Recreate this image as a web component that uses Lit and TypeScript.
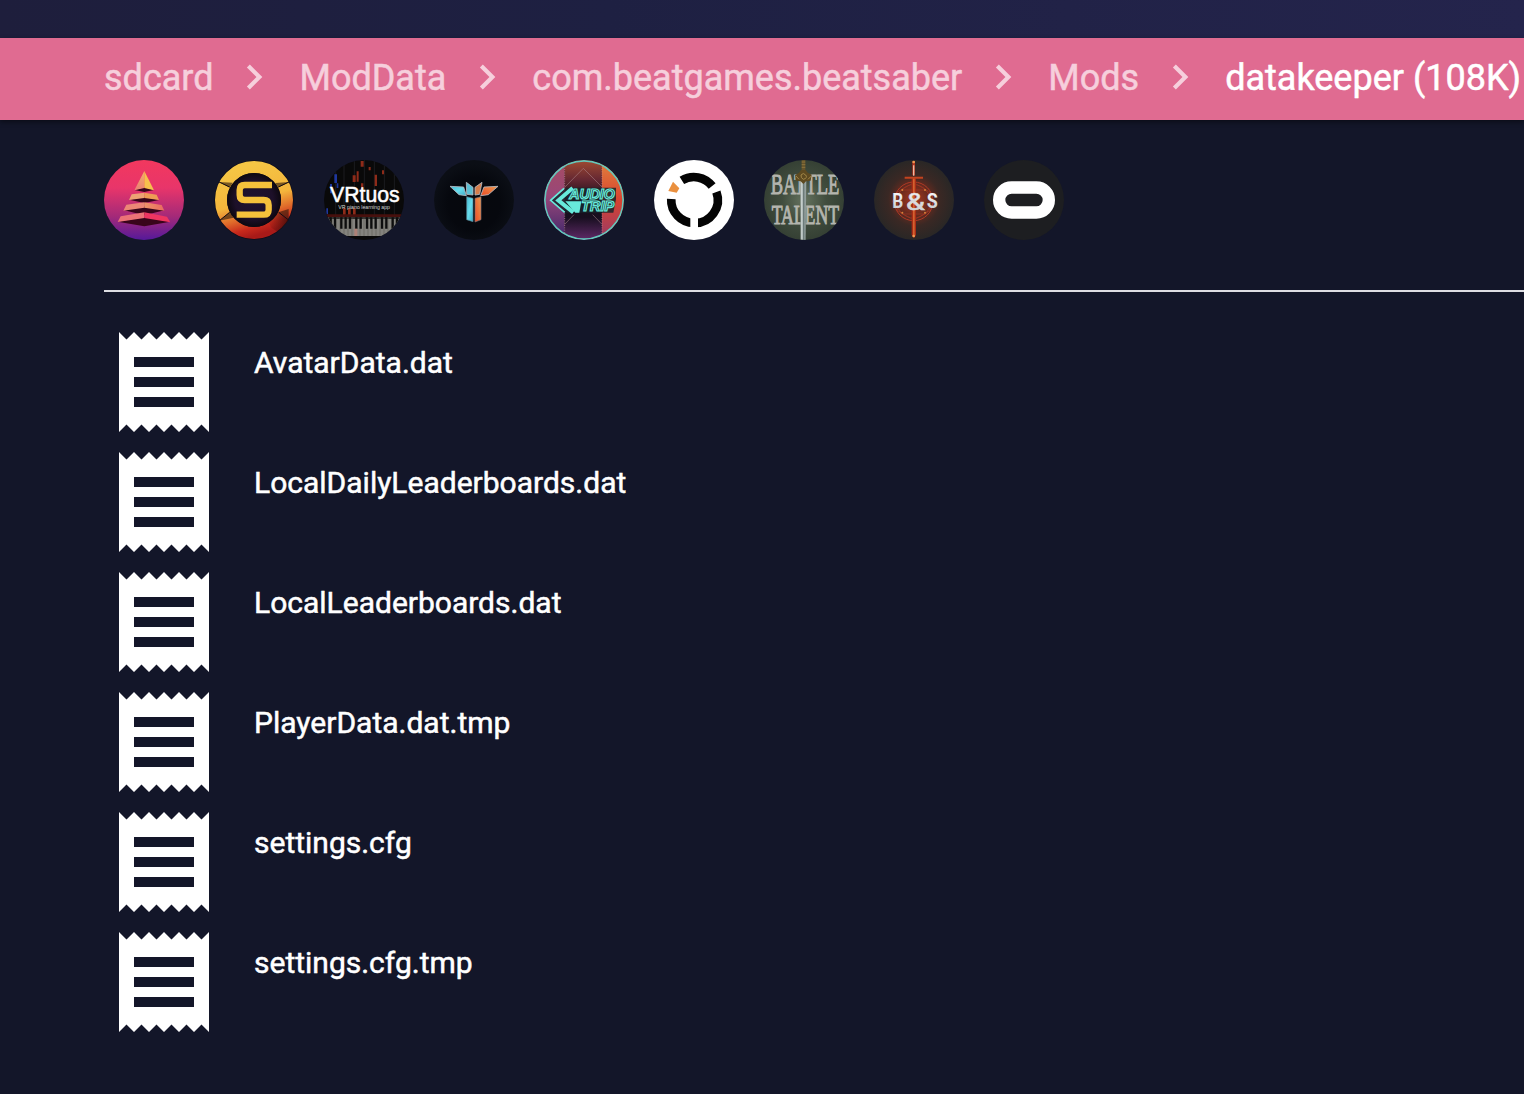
import { LitElement, html, css, svg } from "lit";
import { customElement, property } from "lit/decorators.js";

const crumbs = ["sdcard", "ModData", "com.beatgames.beatsaber", "Mods", "datakeeper (108K)"];

const files = [
  "AvatarData.dat",
  "LocalDailyLeaderboards.dat",
  "LocalLeaderboards.dat",
  "PlayerData.dat.tmp",
  "settings.cfg",
  "settings.cfg.tmp",
];

// Every badge is drawn on a 240-unit square and clipped to a circle.
const pyramid = svg`
  <defs>
    <linearGradient id="bg" x1="0" y1="0" x2="0" y2="1">
      <stop offset="0" stop-color="#f2385e"/><stop offset=".35" stop-color="#e8356a"/>
      <stop offset=".7" stop-color="#a52a78"/><stop offset="1" stop-color="#55199a"/>
    </linearGradient>
    <linearGradient id="l" x1="0" y1="0" x2="0" y2="1"><stop offset="0" stop-color="#f3b06a"/><stop offset="1" stop-color="#ea7f73"/></linearGradient>
    <linearGradient id="r" x1="0" y1="0" x2="1" y2="0"><stop offset="0" stop-color="#ee9468"/><stop offset="1" stop-color="#e86a60"/></linearGradient>
  </defs>
  <rect width="240" height="240" fill="url(#bg)"/>
  <path d="M91 90l30-8 29 8-29 6zM75 119l46-8 44 9-44 9zM58 150l63-11 60 12-60 15zM41 185l80-14 78 14-78 14z" fill="#39051b"/>
  <path d="M121 33L91 91l30-7z" fill="url(#l)"/><path d="M121 33l29 58-29-7z" fill="#f6c04d"/>
  <path d="M83 103l38-5v16l-46 6z" fill="#eda274"/><path d="M121 98l37 6 7 16-44-6z" fill="#ee9c55"/>
  <path d="M67 134l54-7v16l-63 9z" fill="#ec8776"/><path d="M121 127l52 8 8 17-60-9z" fill="url(#r)"/>
  <path d="M50 169l71-12v17l-80 12z" fill="#eb7377"/><path d="M121 157l68 13 10 17-78-13z" fill="#ee3561"/>`;

const synth = svg`
  <defs>
    <linearGradient id="ring" x1=".35" y1="0" x2=".65" y2="1">
      <stop offset="0" stop-color="#f5c544"/><stop offset=".5" stop-color="#f4b63c"/>
      <stop offset=".72" stop-color="#e06a2a"/><stop offset=".88" stop-color="#c8291c"/><stop offset="1" stop-color="#a81a18"/>
    </linearGradient>
    <radialGradient id="core"><stop offset="0" stop-color="#1e1230"/><stop offset=".7" stop-color="#1d1029"/><stop offset="1" stop-color="#0d0810"/></radialGradient>
    <linearGradient id="sh"><stop offset="0" stop-color="#500d08" stop-opacity="0"/><stop offset="1" stop-color="#360b08"/></linearGradient>
  </defs>
  <circle cx="120" cy="120" r="119" fill="#0e0c18"/>
  <circle cx="120" cy="120" r="99" fill="none" stroke="url(#ring)" stroke-width="36"/>
  <path d="M172 203l-13-26 34-20 31 24q-16 20-34 34z" fill="url(#sh)" opacity=".8"/>
  <path d="M15 66l32 17 9-15zM226 66l-34 17-8-14zM193 157l31 24 0-34zM16 182l31-26 12 17z" fill="#2a160c" opacity=".6"/>
  <path d="M193 81l34-16M47 81L13 65M194 157l31 24M47 157l-31 25" stroke="#120b14" stroke-width="3"/>
  <circle cx="120" cy="120" r="81" fill="url(#core)"/>
  <path d="M174 75H92q-15 0-15 15v15q0 15 15 15h57q15 0 15 15v14q0 15-15 15H68" fill="none" stroke="#f5c13b" stroke-width="19"/>`;

const piano = svg`
  <rect width="240" height="240" fill="#090909"/>
  <g stroke="#24262a" stroke-width="2"><path d="M35 0v165M60 0v165M91 0v165M121 0v165M151 0v165M181 0v165M211 0v165"/></g>
  <g fill="#8e2b19"><path d="M110 3h9v17h-9zM86 46h9v20h-9zM98 34h6v31h-6zM134 21h6v10h-6zM174 31h6v12h-6zM152 44h7v34h-7zM57 145h8v20h-8zM72 145h8v20h-8zM87 145h8v23h-8zM111 70h7v18h-7z"/></g>
  <path d="M31 43h8v26h-8zM18 72h6v28h-6zM7 145h5v18H7zM38 70h5v14h-5z" fill="#1f379e"/>
  <path d="M0 163h240v8H0z" fill="#47100d"/>
  <path d="M0 171h240v57H0z" fill="#84837e"/>
  <path d="M0 171h240v6H0z" fill="#2f2d2b"/>
  <path d="M12 172v56M24 172v56M36 172v56M48 172v56M60 172v56M72 172v56M84 172v56M96 172v56M108 172v56M120 172v56M132 172v56M144 172v56M156 172v56M168 172v56M180 172v56M192 172v56M204 172v56M216 172v56" stroke="#55544f" stroke-width="1.5"/>
  <path d="M20 172v34M33 172v34M52 172v34M65 172v34M78 172v34M97 172v34M110 172v34M129 172v34M142 172v34M155 172v34M174 172v34M187 172v34M206 172v34M219 172v34" stroke="#0d0d0d" stroke-width="7"/>
  <path d="M91 206h9v22h-9z" fill="#ad8176"/>
  <text class="sans" x="18" y="126" textLength="209" lengthAdjust="spacingAndGlyphs" font-size="65" fill="#fff" stroke="#fff" stroke-width="1.5">VRtuos</text>
  <text class="sans" x="43" y="146" textLength="155" lengthAdjust="spacingAndGlyphs" font-size="16" fill="#d4d4d4">VR piano learning app</text>`;

const tower = svg`
  <defs>
    <radialGradient id="bg" cx=".5" cy=".55"><stop offset="0" stop-color="#06080d"/><stop offset=".65" stop-color="#06080e"/><stop offset="1" stop-color="#0b0e15"/></radialGradient>
    <linearGradient id="b" x1="0" x2="1" y1="0" y2="1"><stop offset="0" stop-color="#47bcd4"/><stop offset=".5" stop-color="#68dcec"/><stop offset="1" stop-color="#3fa9c5"/></linearGradient>
    <linearGradient id="o" x1="1" x2="0" y1="0" y2="1"><stop offset="0" stop-color="#e99950"/><stop offset="1" stop-color="#ee4c24"/></linearGradient>
  </defs>
  <rect width="240" height="240" fill="url(#bg)"/>
  <g stroke="#b7bac2" stroke-width="2.5">
    <path d="M48 79l41 2 8 26-22-3z" fill="url(#b)"/><path d="M192 79l-42 2-10 26 23-3z" fill="url(#o)"/>
    <path d="M97 67l20 15v23l-19-2z" fill="#5bbfd3"/><path d="M144 67l-21 15v23l14-2z" fill="#d67d4b"/>
  </g>
  <path d="M98 110l19 5v70l-19-6z" fill="url(#b)" stroke="#557b8c" stroke-width="2"/>
  <path d="M123 115l18-5v69l-18 7z" fill="url(#o)" stroke="#7c7078" stroke-width="2"/>`;

const audioTrip = svg`
  <defs>
    <linearGradient id="lft" x1="0" y1="0" x2="0" y2="1"><stop offset="0" stop-color="#a84c62"/><stop offset=".45" stop-color="#984779"/><stop offset="1" stop-color="#3c266b"/></linearGradient>
    <linearGradient id="mid" x1="0" y1="0" x2="0" y2="1"><stop offset="0" stop-color="#a04b31"/><stop offset=".25" stop-color="#642732"/><stop offset=".5" stop-color="#170e17"/><stop offset=".72" stop-color="#180f20"/><stop offset="1" stop-color="#602a68"/></linearGradient>
    <linearGradient id="rgt" x1="0" y1="0" x2="0" y2="1"><stop offset="0" stop-color="#e1833d"/><stop offset=".5" stop-color="#d84330"/><stop offset="1" stop-color="#963a68"/></linearGradient>
  </defs>
  <rect width="62" height="240" fill="url(#lft)"/><rect x="62" width="112" height="240" fill="url(#mid)"/><rect x="174" width="66" height="240" fill="url(#rgt)"/>
  <path d="M62 20v200M174 20v200" stroke="#c78e92" stroke-width="2" stroke-dasharray="3 4"/>
  <path d="M62 82l56-57 57 57M62 193l28-29M174 193l-28-29" fill="none" stroke="#b48d91" stroke-width="2" opacity=".75"/>
  <path d="M19 121l48-38h149v35l-8 40H68z" fill="#17252b" opacity=".85"/>
  <g fill="none" stroke="#67eadb">
    <path d="M60 85l-40 36 42 36" stroke-width="5"/>
    <path d="M86 84l-43 37 45 36" stroke-width="12"/>
  </g>
  <path d="M74 124h38l-6 34H94l-30-34z" fill="#67eadb"/>
  <g class="sans" font-style="italic" font-weight="700" fill="#17252b" stroke="#67eadb" stroke-width="3.6">
    <text x="76" y="117" font-size="42" textLength="136" lengthAdjust="spacingAndGlyphs">AUDIO</text>
    <text x="112" y="154" font-size="42" textLength="98" lengthAdjust="spacingAndGlyphs">TRIP</text>
  </g>
  <circle cx="120" cy="120" r="117.5" fill="none" stroke="#62c9bc" stroke-width="5"/>`;

const segments = svg`
  <rect width="240" height="240" fill="#fff"/>
  <g fill="none" stroke="#040404" stroke-width="26">
    <path d="M83.6 61.2A69 69 0 0 1 174.4 78"/>
    <path d="M187.2 96A69 69 0 0 1 120 189"/>
    <path d="M120 189A69 69 0 0 1 51.7 117"/>
  </g>
  <path d="M109 160h23v50h-23z" fill="#fff"/>
  <path d="M57 65l19 20-8 13-25-5z" fill="#ea903f"/>`;

const battleTalent = svg`
  <defs>
    <radialGradient id="bg"><stop offset="0" stop-color="#65735f"/><stop offset=".55" stop-color="#414d3e"/><stop offset="1" stop-color="#354034"/></radialGradient>
    <linearGradient id="blade"><stop offset="0" stop-color="#dbe2df"/><stop offset=".48" stop-color="#a4b0ae"/><stop offset=".52" stop-color="#6b7978"/><stop offset="1" stop-color="#b4bfbc"/></linearGradient>
  </defs>
  <rect width="240" height="240" fill="url(#bg)"/>
  <g class="serif" fill="#b4b5ae" stroke="#b4b5ae" stroke-width="3">
    <text transform="translate(20 103) scale(.597 1)" font-size="90" textLength="345" lengthAdjust="spacingAndGlyphs">BATTLE</text>
    <text transform="translate(23 193) scale(.633 1)" font-size="82" textLength="319" lengthAdjust="spacingAndGlyphs">TALENT</text>
  </g>
  <path d="M109 60h18l-2 180h-15z" fill="url(#blade)" stroke="#4a554d" stroke-width="1"/>
  <path d="M113 0h11v38h-11z" fill="#65532b"/><path d="M113 6h11M113 14h11M113 22h11" stroke="#a08546" stroke-width="2"/>
  <path d="M111 30h14l6 8 12 6-3 18-14 2-8 8-8-8-14-2-3-16 12-8z" fill="#5e4a20"/>
  <path d="M111 45q7-9 14 0t-7 13q-8-4-7-13M96 48l9 10M142 48l-10 10" fill="none" stroke="#a18748" stroke-width="3"/>`;

const bladeSorcery = svg`
  <defs>
    <radialGradient id="bg"><stop offset="0" stop-color="#a83a22"/><stop offset=".35" stop-color="#6e2b1e"/><stop offset=".65" stop-color="#3a2824"/><stop offset="1" stop-color="#292726"/></radialGradient>
    <linearGradient id="t" x1="0" y1="0" x2="0" y2="1"><stop offset="0" stop-color="#fff"/><stop offset="1" stop-color="#bfc4ca"/></linearGradient>
  </defs>
  <rect width="240" height="240" fill="url(#bg)"/>
  <g fill="none" stroke="#b03a26" stroke-width="3">
    <circle cx="119" cy="124" r="58"/><circle cx="119" cy="124" r="50" stroke-width="1.5"/>
    <path d="M119 68l49 28v56l-49 28-49-28V96zM83 90h72l28 34-28 38H83l-28-38z" stroke-width="1.5"/>
  </g>
  <g fill="#d58038"><circle cx="85" cy="90" r="3"/><circle cx="153" cy="90" r="3"/><circle cx="85" cy="158" r="3"/><circle cx="153" cy="158" r="3"/></g>
  <path d="M113 55h13v170l-6 10-7-10z" fill="#a92d16"/><path d="M117 55h5v170h-5z" fill="#d4622f"/>
  <path d="M92 53h55" stroke="#c2431f" stroke-width="6"/><path d="M119 4v42" stroke="#b3341d" stroke-width="8"/><path d="M119 16v31" stroke="#ebb9a2" stroke-width="4"/>
  <circle cx="119" cy="6" r="4" fill="#f09a52"/><circle cx="119" cy="228" r="4" fill="#f09a52"/>
  <g font-weight="700" fill="url(#t)">
    <text x="55" y="144" font-size="60" textLength="33" lengthAdjust="spacingAndGlyphs">B</text>
    <text x="158" y="144" font-size="59" textLength="33" lengthAdjust="spacingAndGlyphs">S</text>
  </g>
  <text x="96" y="149" font-size="70" textLength="56" lengthAdjust="spacingAndGlyphs" fill="url(#t)" stroke="#d8d5d5" stroke-width="2">&amp;</text>`;

const headset = svg`
  <rect width="240" height="240" fill="#1d1e21"/>
  <rect x="45.5" y="82.5" width="149" height="75" rx="37.5" fill="none" stroke="#fff" stroke-width="37"/>`;

const badges = [pyramid, synth, piano, tower, audioTrip, segments, battleTalent, bladeSorcery, headset];

// Each badge owns a shadow root, so gradient ids stay local to it.
@customElement("app-badge")
class AppBadge extends LitElement {
  @property({ attribute: false }) art: unknown;

  static styles = css`
    :host { display: block; width: 80px; height: 80px; border-radius: 50%; overflow: hidden; }
    .art { display: block; width: 80px; height: 80px; font-family: Roboto, "Liberation Sans", sans-serif; }
    .sans { font-family: "Liberation Sans", sans-serif; }
    .serif { font-family: "Liberation Serif", serif; }
  `;

  render() {
    return html`<svg class="art" viewBox="0 0 240 240">${this.art}</svg>`;
  }
}

@customElement("app-root")
class AppRoot extends LitElement {
  static styles = css`
    :host {
      display: flex;
      flex-direction: column;
      box-sizing: border-box;
      width: 100%;
      height: 100vh;
      overflow: hidden;
      background: #131629;
      color: #fff;
      font-family: Roboto, "Liberation Sans", sans-serif;
    }
    .top { flex: none; height: 38px; background: linear-gradient(90deg, #1e1e3c 0%, #1e2042 40%, #24244c 100%); }
    .crumbs {
      flex: none;
      display: flex;
      align-items: center;
      height: 82px;
      box-sizing: border-box;
      padding: 0 0 2px 104px;
      background: #e06b91;
      box-shadow: 0 2px 5px rgba(0, 0, 0, 0.45);
      font-size: 36px;
      line-height: 80px;
      white-space: nowrap;
    }
    .crumb { color: #f6cfdc; -webkit-text-stroke: 0.5px currentColor; }
    .current { color: #fff; }
    .chevron { flex: none; width: 50px; height: 50px; margin: 0 20px 2px 16px; fill: #f6cfdc; }
    .content { padding: 40px 0 0 104px; }
    .badges { display: flex; gap: 30px; padding-bottom: 50px; border-bottom: 2px solid #dedee3; }
    .files { display: flex; flex-direction: column; padding-top: 30px; }
    .file { display: flex; height: 120px; gap: 30px; }
    .receipt { width: 120px; height: 120px; fill: #fff; }
    .name { padding-top: 23px; font-size: 30px; line-height: 35px; -webkit-text-stroke: 0.5px currentColor; }
  `;

  render() {
    return html`
      <div class="top"></div>
      <nav class="crumbs">
        ${crumbs.map(
          (c, i) => html`${i
              ? html`<svg class="chevron" viewBox="0 0 24 24"><path d="M10 6L8.59 7.41 13.17 12l-4.58 4.59L10 18l6-6z" /></svg>`
              : ""}<span class="crumb ${i === crumbs.length - 1 ? "current" : ""}">${c}</span>`
        )}
      </nav>
      <main class="content">
        <div class="badges">${badges.map((b) => html`<app-badge .art=${b}></app-badge>`)}</div>
        <div class="files">
          ${files.map(
            (f) => html`<div class="file">
              <svg class="receipt" viewBox="0 0 24 24">
                <path d="M18 17H6v-2h12v2zm0-4H6v-2h12v2zm0-4H6V7h12v2zM3 22l1.5-1.5L6 22l1.5-1.5L9 22l1.5-1.5L12 22l1.5-1.5L15 22l1.5-1.5L18 22l1.5-1.5L21 22V2l-1.5 1.5L18 2l-1.5 1.5L15 2l-1.5 1.5L12 2l-1.5 1.5L9 2 7.5 3.5 6 2 4.5 3.5 3 2v20z" />
              </svg>
              <span class="name">${f}</span>
            </div>`
          )}
        </div>
      </main>
    `;
  }
}
